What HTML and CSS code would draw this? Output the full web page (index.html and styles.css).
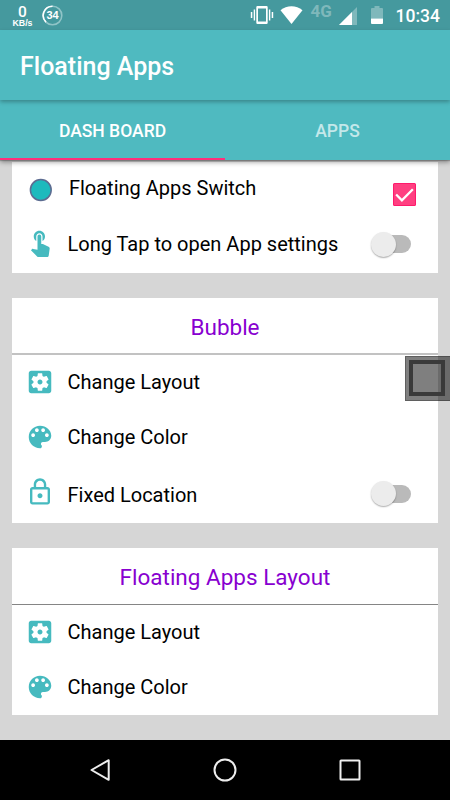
FILE: index.html
```html
<!DOCTYPE html>
<html lang="en">
<head>
<meta charset="utf-8">
<title>Floating Apps</title>
<link rel="stylesheet" href="styles.css">
</head>
<body>
<svg class="defs" aria-hidden="true">
  <symbol id="layout" viewBox="0 0 24 24"><path d="M12 10c-1.1 0-2 .9-2 2s.9 2 2 2 2-.9 2-2-.9-2-2-2zm7-7H5c-1.11 0-2 .9-2 2v14c0 1.1.89 2 2 2h14c1.11 0 2-.9 2-2V5c0-1.100-.89-2-2-2zm-1.750 9c0 .23-.02.46-.05.68l1.480 1.160c.13.11.17.3.08.45l-1.400 2.420c-.09.15-.27.21-.43.15l-1.740-.7c-.36.28-.76.51-1.180.69l-.26 1.850c-.03.17-.18.3-.35.3h-2.800c-.17 0-.32-.13-.35-.29l-.26-1.850c-.43-.18-.82-.41-1.180-.69l-1.740.7c-.16.06-.34 0-.43-.15l-1.400-2.420c-.09-.15-.05-.34.08-.45l1.480-1.160c-.03-.23-.05-.46-.05-.69 0-.23.02-.46.05-.68l-1.480-1.160c-.13-.11-.17-.3-.08-.45l1.400-2.420c.09-.15.27-.21.43-.15l1.740.7c.36-.28.76-.51 1.180-.69l.26-1.850c.03-.17.18-.3.35-.3h2.800c.17 0 .32.13.35.29l.26 1.850c.43.18.82.41 1.180.69l1.740-.7c.16-.06.34 0 .43.15l1.400 2.420c.09.15.05.34-.08.45l-1.480 1.160c.03.23.05.46.05.69z"/></symbol>
  <symbol id="palette" viewBox="0 0 24 24"><path d="M12 3c-4.970 0-9 4.030-9 9s4.030 9 9 9c.83 0 1.500-.67 1.500-1.500 0-.39-.15-.74-.39-1.010-.23-.26-.38-.61-.38-.99 0-.83.67-1.500 1.500-1.500H16c2.760 0 5-2.240 5-5 0-4.420-4.030-8-9-8zm-5.500 9c-.83 0-1.500-.67-1.500-1.500S5.670 9 6.500 9 8 9.670 8 10.500 7.330 12 6.500 12zm3-4C8.670 8 8 7.330 8 6.500S8.670 5 9.500 5s1.500.67 1.500 1.500S10.330 8 9.500 8zm5 0c-.83 0-1.500-.67-1.500-1.500S13.670 5 14.500 5s1.500.67 1.500 1.500S15.330 8 14.500 8zm3 4c-.83 0-1.500-.67-1.500-1.500S16.670 9 17.500 9s1.500.67 1.500 1.500-.67 1.500-1.500 1.500z"/></symbol>
</svg>
<div class="screen">
  <header class="status">
    <div class="speed"><span class="speed-value">0</span><span class="speed-unit">KB/s</span></div>
    <div class="level">
      <svg class="ring" viewBox="0 0 21 21" fill="none" stroke-width="1.6"><circle cx="10.500" cy="10.500" r="9.300" stroke="#90c4c7"/><path d="M4 17.150A9.300 9.300 0 0 1 10.500 1.200" stroke="#fff"/></svg>
      <span>34</span>
    </div>
    <svg class="vibrate" viewBox="0 0 24 20" fill="#fff"><path fill-rule="evenodd" d="M7.500 1h9q1.200 0 1.200 1.200v15.600q0 1.200-1.200 1.200h-9q-1.200 0-1.200-1.200V2.200Q6.300 1 7.500 1zM8 3.500v13h8v-13zM3.700 4.500h1.400v11H3.700zM.800 7h1.500v6H.800zM18.900 4.500h1.400v11h-1.400zM21.700 7h1.500v6h-1.500z"/></svg>
    <svg class="wifi" viewBox="0 0 23 18" fill="#fff"><path d="M.5 4.200C6.700-1 16.300-1 22.500 4.200L11.500 18z"/></svg>
    <span class="network">4G</span>
    <svg class="signal" viewBox="0 0 18 18"><path fill="#7fb8bb" d="M18 0v18H0z"/><path fill="#fff" d="M13 5v13H0z"/></svg>
    <svg class="battery" viewBox="0 0 12 18"><path fill="#7fb8bb" d="M3.500 0h5v2H11q1 0 1 1v9.500H0V3q0-1 1-1h2.500z"/><path fill="#fff" d="M0 12.500h12V17q0 1-1 1H1q-1 0-1-1z"/></svg>
    <time>10:34</time>
  </header>
  <div class="toolbar"><h1>Floating Apps</h1></div>
  <nav class="tabs"><span class="tab active">DASH BOARD</span><span class="tab">APPS</span></nav>
  <main>
    <section class="card first">
      <div class="row">
        <svg class="icon" viewBox="0 0 30 30"><circle cx="15.800" cy="15" r="10.400" fill="#1dbabd" stroke="#5c6c91" stroke-width="1.500"/></svg>
        <span class="label switch-label">Floating Apps Switch</span>
        <svg class="check" viewBox="0 0 22 22"><rect x=".5" y=".5" width="21" height="21" rx="1" fill="#ff4081" stroke="#ff1a6c"/><path d="M3 11l5.500 5.500L19 6" fill="none" stroke="#fff" stroke-width="2.200"/></svg>
      </div>
      <div class="row tap">
        <svg class="icon" viewBox="0 0 24 24"><path d="M9 11.240V7.500C9 6.120 10.120 5 11.500 5S14 6.120 14 7.500v3.740c1.210-.81 2-2.180 2-3.740C16 5.010 13.990 3 11.500 3S7 5.010 7 7.500c0 1.560.79 2.930 2 3.740zm9.840 4.630l-4.540-2.260c-.17-.07-.35-.11-.54-.11H13v-6c0-.83-.67-1.500-1.500-1.500S10 6.670 10 7.500v10.740l-3.430-.72c-.08-.01-.15-.03-.24-.03-.31 0-.59.13-.79.33l-.79.8 4.940 4.940c.27.27.65.44 1.060.44h6.790c.75 0 1.330-.55 1.440-1.280l.75-5.270c.01-.07.02-.14.02-.2 0-.62-.38-1.160-.91-1.380z"/></svg>
        <span class="label">Long Tap to open App settings</span>
        <span class="toggle"><i></i></span>
      </div>
    </section>
    <section class="card">
      <h2 class="soft">Bubble</h2>
      <div class="row"><svg class="icon"><use href="#layout"/></svg><span class="label">Change Layout</span></div>
      <div class="row"><svg class="icon"><use href="#palette"/></svg><span class="label">Change Color</span></div>
      <div class="row lock">
        <svg class="icon" viewBox="0 0 24 24"><path fill-rule="evenodd" d="M12 17c1.100 0 2-.9 2-2s-.9-2-2-2-2 .9-2 2 .9 2 2 2zm6-9h-1V6c0-2.760-2.240-5-5-5S7 3.240 7 6v2H6c-1.100 0-2 .9-2 2v10c0 1.100.9 2 2 2h12c1.100 0 2-.9 2-2V10c0-1.100-.9-2-2-2zM8.900 6c0-1.710 1.390-3.100 3.100-3.100s3.100 1.390 3.100 3.100v2H8.900zM18.100 20.100H5.900V9.900h12.200z"/></svg>
        <span class="label">Fixed Location</span>
        <span class="toggle"><i></i></span>
      </div>
    </section>
    <section class="card">
      <h2>Floating Apps Layout</h2>
      <div class="row upper"><svg class="icon"><use href="#layout"/></svg><span class="label">Change Layout</span></div>
      <div class="row"><svg class="icon"><use href="#palette"/></svg><span class="label">Change Color</span></div>
    </section>
  </main>
  <footer class="navbar">
    <svg viewBox="0 0 30 30"><path d="M23.700 5.200v19.600L6.500 15z"/></svg>
    <svg viewBox="0 0 30 30"><circle cx="15" cy="15" r="10.500"/></svg>
    <svg viewBox="0 0 30 30"><rect x="5.500" y="5.500" width="19" height="19" rx=".5"/></svg>
  </footer>
  <div class="bubble"><div></div></div>
</div>
</body>
</html>
```

FILE: styles.css
```css
* { box-sizing: border-box; }
body { margin: 0; font-family: Roboto, sans-serif; color: #111; }
svg { display: block; flex: none; }
.defs { position: absolute; width: 0; height: 0; }
.screen { position: relative; display: flex; flex-direction: column; width: 450px; height: 800px; overflow: hidden; background: #d6d6d6; }

.status { display: flex; align-items: center; flex: none; height: 30px; padding: 0 10px 0 11px; background: #45999e; color: #fff; }
.speed { display: flex; flex-direction: column; align-items: center; width: 23px; padding-top: 2px; font-family: "Liberation Sans", sans-serif; font-weight: 700; }
.speed-value { font: 500 15.500px/14px Roboto, sans-serif; }
.speed-unit { font-size: 8.800px; line-height: 9px; }
.level { display: grid; place-items: center; width: 21px; height: 21px; margin: 0 auto 0 8px; font: 700 11px/21px "Liberation Sans", sans-serif; }
.level > * { grid-area: 1 / 1; }
.ring { width: 21px; height: 21px; }
.vibrate { width: 24px; height: 20px; }
.wifi { width: 23px; height: 18px; margin-left: 6px; }
.network { width: 22px; margin: 0 6px 8px 8px; color: #7fb8bb; font-size: 17px; font-weight: 700; line-height: 18px; }
.signal { width: 18px; height: 18px; margin-top: 2px; }
.battery { width: 12px; height: 18px; margin-left: 14px; }
time { margin-left: 13px; font-size: 17.500px; font-weight: 500; line-height: 30px; padding-top: 1px; }

.toolbar { z-index: 2; display: flex; align-items: center; flex: none; height: 70px; padding: 3px 20px 0; background: #4fbac0; box-shadow: 0 2px 4px rgba(0,0,0,.28); }
h1 { margin: 0; color: #fff; font-size: 25px; font-weight: 500; line-height: 31px; }
.tabs { z-index: 1; display: flex; flex: none; height: 60px; background: #4fbac0; box-shadow: 0 2px 5px rgba(0,0,0,.4), 0 1px 1px rgba(0,0,0,.2); }
.tab { flex: 1; padding-top: 1px; color: #c4e8ea; font-size: 17.500px; font-weight: 500; line-height: 60px; text-align: center; }
.tab.active { color: #fff; border-bottom: 2px solid #ff2f7b; }

main { flex: 1; padding: 2px 12.400px 0; }
.card { margin-bottom: 25px; background: #fff; }
.card.first { height: 111px; }
h2 { height: 57px; margin: 0; border-bottom: 1px solid #858585; color: #8800d0; font-size: 22.500px; font-weight: 400; line-height: 59px; text-align: center; }
h2.soft { height: 57px; border-bottom: 2px solid #c2c2c2; line-height: 58px; }
.row { display: flex; align-items: center; height: 55px; padding: 0 26.500px 0 12.500px; }
.soft + .row, .upper { height: 54px; }
.first .row:first-child { padding-right: 21.500px; }
.row.tap { height: 54px; }
.tap .icon { margin-top: -4px; }
.row.lock { height: 59px; }
.lock .icon { margin-top: -4px; }
.lock .label { margin-top: 2px; }
.icon { width: 30px; height: 30px; fill: #46babf; }
.label { flex: 1; margin-left: 12.600px; font-size: 20px; line-height: 26px; white-space: nowrap; color: #000; }
.switch-label { margin: -3px 0 0 14px; }
.check { width: 23px; height: 23px; margin-top: 9px; }
.toggle { display: flex; align-items: center; width: 37px; height: 18px; border-radius: 9px; background: #bababa; }
.toggle i { flex: none; width: 25px; height: 25px; margin-left: -3px; border-radius: 50%; background: #ececec; box-shadow: 0 1px 1.500px rgba(0,0,0,.32); }

.navbar { display: flex; justify-content: space-around; align-items: center; flex: none; height: 60px; padding: 0 37.500px; background: #000; }
.navbar svg { width: 30px; height: 30px; fill: none; stroke: #eee; stroke-width: 2; stroke-linejoin: round; }
.card:last-child { height: 167px; }
.bubble { position: absolute; z-index: 3; left: 405px; top: 356px; width: 45px; height: 45px; padding: 3px; background: rgba(0,0,0,.5); border: 1px solid rgba(0,0,0,.25); border-right: 0; }
.bubble div { width: 36px; height: 36px; border: 4px solid #3a3a3a; }
```
